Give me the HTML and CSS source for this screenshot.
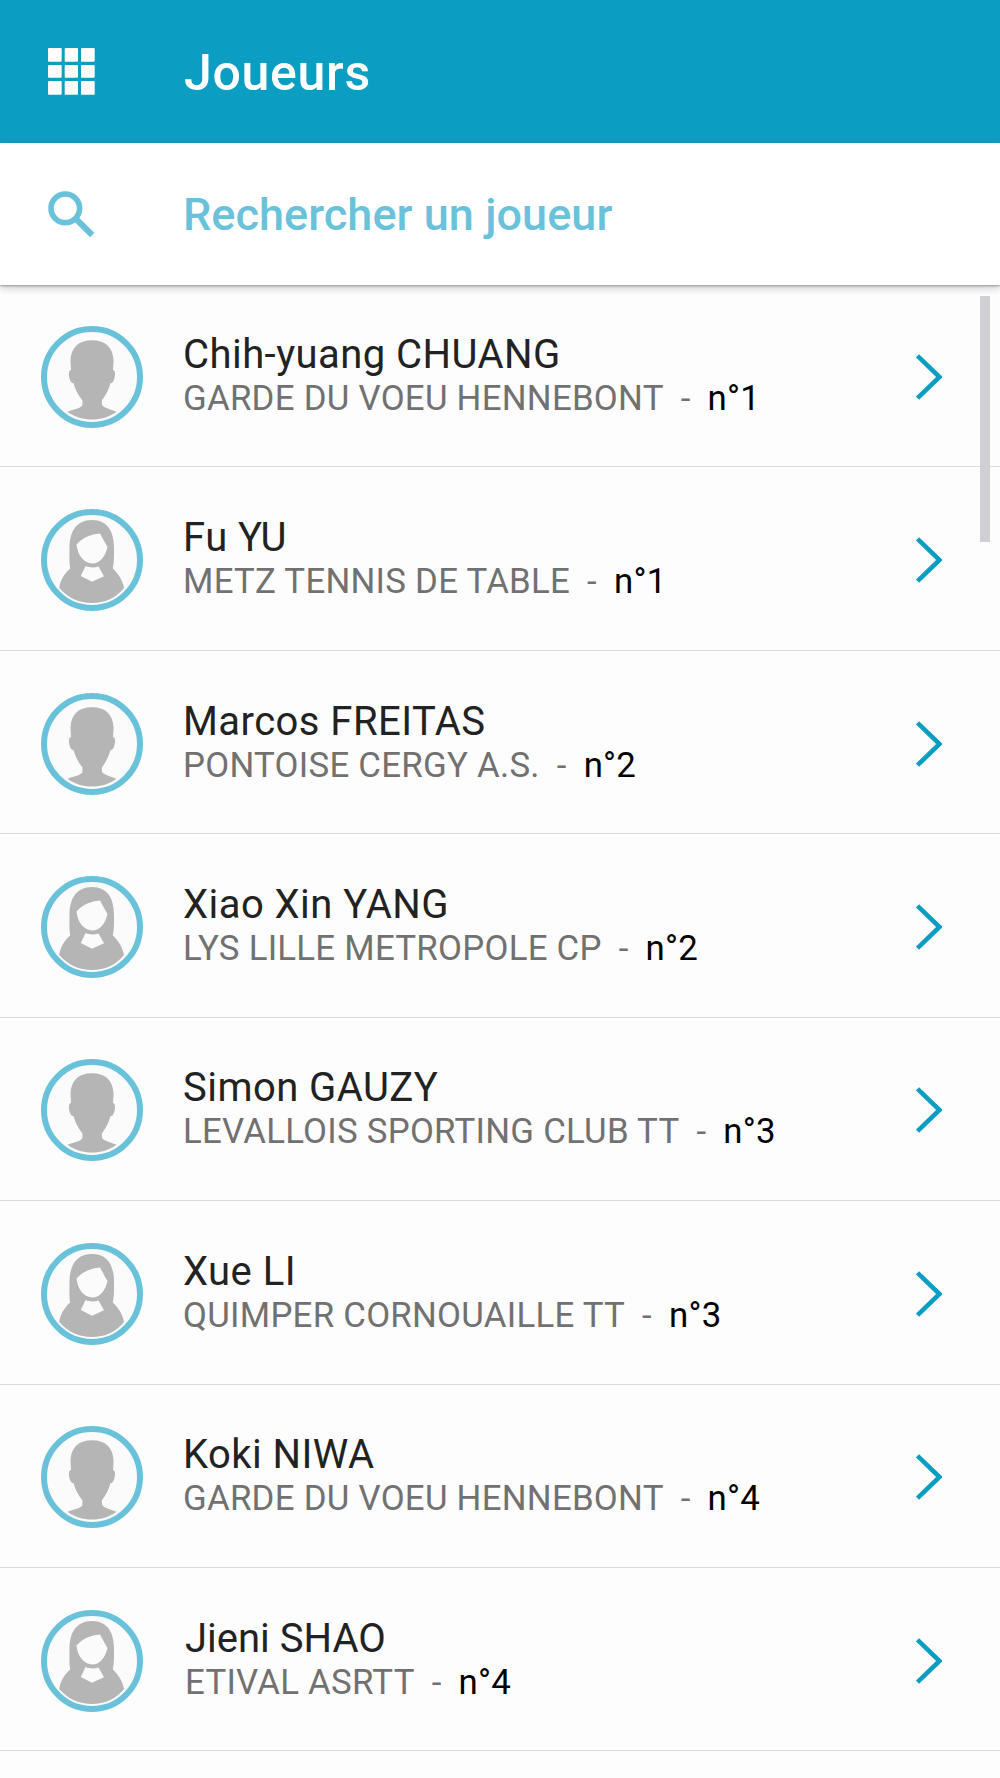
FILE: index.html
```html
<!DOCTYPE html>
<html lang="fr">
<head>
  <meta charset="UTF-8" />
  <title>Joueurs</title>
  <meta name="viewport" content="width=device-width, initial-scale=1" />
  <link rel="stylesheet" href="styles.css">
</head>
<body>

  <!-- shared icons -->
  <svg class="sprite" width="0" height="0">
    <symbol id="man" viewBox="0 0 102 102">
      <circle cx="51" cy="51" r="48" fill="#fbfbfc" stroke="#69c2da" stroke-width="6" />
      <path fill="#b5b5b5" d="M51 14.3C37 14.3 29.800 22 29.500 35L30 44C27.500 44.500 27.500 49 28.700 53C29.600 56 31 57.300 32.600 57.300C34 63 37 69 41.500 74.500L41.300 79.500C38 83 32 83.500 26.500 85.800C34 91.200 42 93.600 51 93.600C60 93.600 68 91.200 75.500 85.800C70 83.500 64 82.500 61 79L60.800 74.500C65 69 68 63 69.400 57.300C71.200 57.300 72.700 55.500 73.500 52C74.500 48 74.400 44.500 72 44L72.600 35C72.200 22 65 14.300 51 14.300Z" />
    </symbol>
    <symbol id="woman" viewBox="0 0 102 102">
      <circle cx="51" cy="51" r="48" fill="#fbfbfc" stroke="#69c2da" stroke-width="6" />
      <path fill="#b5b5b5" fill-rule="evenodd" d="M51 11C35 11 28.500 23 28.500 39C28.500 47 28 53 29.200 59.500C23 65 19.500 71 18.200 79C27 89 38 94 51 94C64 94 75 89 83 79C81.500 71 77.500 65 71.800 59.500C73.200 53 73 47 73 39C73 23 67 11 51 11ZM35.500 35.500C42 28 50 25.500 59 24.500C61.500 29 64 34 66.500 38C64.500 47 59 54.500 51.500 54.500C43 54.500 36.500 46 35.500 35.500ZM44.500 57C49 58.800 53.500 58.800 57.500 57.500L63 67.200L51 72.800L39.800 67Z" />
    </symbol>
    <symbol id="chevron" viewBox="0 0 26 46">
      <path d="M1.500 1.800L23.500 23L1.500 44.200" fill="none" stroke="#0b9cc1" stroke-width="4.600" />
    </symbol>
  </svg>

  <header class="topbar">
    <svg class="icon" viewBox="0 0 47 47" fill="#fff">
      <rect x="0" y="0" width="13.700" height="13.700" rx="1" /><rect x="16.700" y="0" width="13.300" height="13.700" rx="1" /><rect x="33" y="0" width="13.700" height="13.700" rx="1" />
      <rect x="0" y="17" width="13.700" height="12.700" rx="1" /><rect x="16.700" y="17" width="13.300" height="12.700" rx="1" /><rect x="33" y="17" width="13.700" height="12.700" rx="1" />
      <rect x="0" y="33" width="13.700" height="13.700" rx="1" /><rect x="16.700" y="33" width="13.300" height="13.700" rx="1" /><rect x="33" y="33" width="13.700" height="13.700" rx="1" />
    </svg>
    <h1>Joueurs</h1>
  </header>

  <div class="search">
    <svg class="icon" viewBox="0 0 47 47" fill="none" stroke="#69c2da">
      <circle cx="17.300" cy="17.300" r="14.300" stroke-width="5.600" />
      <path d="M28 28L44.200 44" stroke-width="6" />
    </svg>
    <span class="placeholder">Rechercher un joueur</span>
  </div>

  <ul class="players">
    <li>
      <svg class="avatar"><use href="#man" /></svg>
      <div class="info"><div class="name">Chih-yuang CHUANG</div><div class="club">GARDE DU VOEU HENNEBONT<i>-</i><b>n°1</b></div></div>
      <svg class="chevron"><use href="#chevron" /></svg>
    </li>
    <li>
      <svg class="avatar"><use href="#woman" /></svg>
      <div class="info"><div class="name">Fu YU</div><div class="club">METZ TENNIS DE TABLE<i>-</i><b>n°1</b></div></div>
      <svg class="chevron"><use href="#chevron" /></svg>
    </li>
    <li>
      <svg class="avatar"><use href="#man" /></svg>
      <div class="info"><div class="name">Marcos FREITAS</div><div class="club">PONTOISE CERGY A.S.<i>-</i><b>n°2</b></div></div>
      <svg class="chevron"><use href="#chevron" /></svg>
    </li>
    <li>
      <svg class="avatar"><use href="#woman" /></svg>
      <div class="info"><div class="name">Xiao Xin YANG</div><div class="club">LYS LILLE METROPOLE CP<i>-</i><b>n°2</b></div></div>
      <svg class="chevron"><use href="#chevron" /></svg>
    </li>
    <li>
      <svg class="avatar"><use href="#man" /></svg>
      <div class="info"><div class="name">Simon GAUZY</div><div class="club">LEVALLOIS SPORTING CLUB TT<i>-</i><b>n°3</b></div></div>
      <svg class="chevron"><use href="#chevron" /></svg>
    </li>
    <li>
      <svg class="avatar"><use href="#woman" /></svg>
      <div class="info"><div class="name">Xue LI</div><div class="club">QUIMPER CORNOUAILLE TT<i>-</i><b>n°3</b></div></div>
      <svg class="chevron"><use href="#chevron" /></svg>
    </li>
    <li>
      <svg class="avatar"><use href="#man" /></svg>
      <div class="info"><div class="name">Koki NIWA</div><div class="club">GARDE DU VOEU HENNEBONT<i>-</i><b>n°4</b></div></div>
      <svg class="chevron"><use href="#chevron" /></svg>
    </li>
    <li class="last">
      <svg class="avatar"><use href="#woman" /></svg>
      <div class="info"><div class="name">Jieni SHAO</div><div class="club">ETIVAL ASRTT<i>-</i><b>n°4</b></div></div>
      <svg class="chevron"><use href="#chevron" /></svg>
    </li>
  </ul>

  <div class="scrollbar"></div>

</body>
</html>
```
FILE: styles.css
```css
* {
  box-sizing: border-box;
}
body {
  margin: 0;
  height: 1778px;
  overflow: hidden;
  position: relative;
  font-family: Roboto, sans-serif;
  background: #fdfdfd;
}
.sprite {
  position: absolute;
}
.topbar, .search {
  display: flex;
  align-items: center;
  padding-left: 48px;
}
.topbar {
  height: 142.7px;
  background: #0c9dc2;
}
.icon {
  width: 47px;
  height: 47px;
  margin-right: 89px;
}
h1 {
  margin: 3px 0 0;
  font-size: 50px;
  font-weight: 500;
  letter-spacing: 0.7px;
  color: #fff;
}
.search {
  position: relative;
  height: 142.3px;
  padding-top: 1px;
  background: #fff;
  box-shadow: 0 1px 2px #999, 0 3px 8px rgba(0,0,0,0.2);
}
.placeholder {
  margin-left: -1px;
  font-size: 45px;
  font-weight: 500;
  letter-spacing: 0.05px;
  color: #69c2da;
}
.players {
  list-style: none;
  margin: -1px 0 0;
  padding: 0;
}
.players li {
  display: flex;
  align-items: center;
  height: 183.43px;
  padding: 3px 57px 0 41px;
  border-bottom: 1px solid #dadbdb;
}
.avatar {
  width: 102px;
  height: 102px;
}
.info {
  flex: 1;
  margin: -2px 0 0 40px;
  white-space: nowrap;
}
.last .info {
  padding-left: 2px;
}
.name {
  font-size: 40px;
  line-height: 44px;
  letter-spacing: 0.45px;
  color: #222;
}
.last .name {
  letter-spacing: 0;
}
.club {
  font-size: 34.8px;
  line-height: 42px;
  letter-spacing: 0.26px;
  color: #717171;
}
.club i {
  font-style: normal;
  margin: 0 17px;
}
.club b {
  font-weight: 400;
  color: #000;
}
.chevron {
  width: 26px;
  height: 46px;
  margin-right: 1px;
}
.scrollbar {
  position: absolute;
  top: 295.5px;
  right: 10px;
  width: 10px;
  height: 246px;
  background: #d0d0d4;
}
```
